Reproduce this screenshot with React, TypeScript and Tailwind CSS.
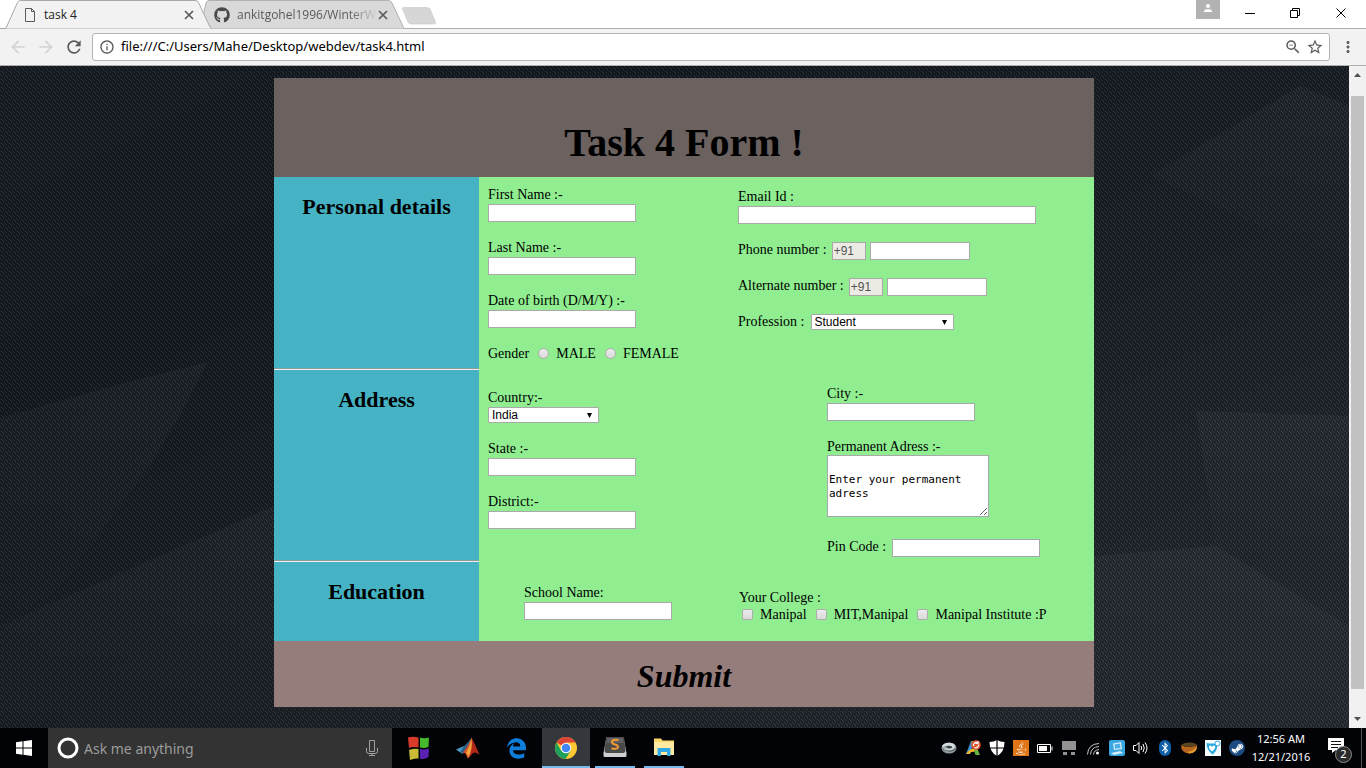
import type { ReactNode } from "react";
import { FaGithub, FaJava, FaSteamSymbol, FaBluetoothB } from "react-icons/fa";
import { FaEdgeLegacy } from "react-icons/fa6";
import {
  MdArrowBack,
  MdArrowForward,
  MdInfoOutline,
  MdMoreVert,
  MdPerson,
  MdRefresh,
  MdStarBorder,
  MdZoomOut,
} from "react-icons/md";

const boxStyle = "h-[18px] border border-[#a9a9a9] bg-white px-px text-[12px] outline-none";
const labelStyle = "pb-[2px] leading-[15px]";

function TextField({ id, label, width = "w-[148px]" }: { id: string; label: string; width?: string }) {
  return (
    <div className="flex flex-col items-start">
      <label htmlFor={id} className={labelStyle}>
        {label}
      </label>
      <input id={id} type="text" className={`${boxStyle} ${width}`} />
    </div>
  );
}

function PhoneField({ id, label }: { id: string; label: string }) {
  return (
    <div className="flex items-start">
      <label htmlFor={id} className={`pr-[5px] ${labelStyle}`}>
        {label}
      </label>
      <input
        type="text"
        disabled
        value="+91"
        aria-label={`${label} country code`}
        className="mr-1 h-[18px] w-[34px] border border-[#a9a9a9] bg-[#ebebe4] px-px font-['Liberation_Sans',Arial,sans-serif] text-[12px] text-[#545454]"
      />
      <input id={id} type="text" className={`${boxStyle} w-[100px]`} />
    </div>
  );
}

function SelectBox({ id, options, width }: { id: string; options: string[]; width: string }) {
  return (
    <div className={`relative flex h-4 ${width}`}>
      <select
        id={id}
        className="h-4 w-full appearance-none rounded-[1px] border border-[#a9a9a9] bg-white pl-[3px] font-['Liberation_Sans',Arial,sans-serif] text-[12px] leading-[14px] text-black outline-none"
      >
        {options.map((o) => (
          <option key={o}>{o}</option>
        ))}
      </select>
      <svg viewBox="0 0 5 5" className="pointer-events-none absolute right-[7px] top-[6px] size-[5px]" aria-hidden="true">
        <path d="M0 0h5L2.5 5z" fill="#000" />
      </svg>
    </div>
  );
}

function Tick({ type, name, label }: { type: "radio" | "checkbox"; name: string; label: string }) {
  const shape = type === "radio" ? "rounded-full" : "rounded-[2px]";
  return (
    <label className={`flex items-start gap-[7px] ${labelStyle}`}>
      <input
        type={type}
        name={name}
        className={`mt-[2px] size-[11px] appearance-none border border-[#adadad] bg-linear-to-b from-[#ececec] to-[#dadada] ${shape}`}
      />
      {label}
    </label>
  );
}

function Section({ title, height, divider, children }: { title: string; height: string; divider?: boolean; children: ReactNode }) {
  return (
    <section className={`flex ${height}`}>
      <div className="flex w-1/4 flex-col bg-[#45b3c4]">
        <h2 className="pt-[17px] text-center text-[22px] font-bold leading-[26px]">{title}</h2>
        {divider && <div className="mt-auto h-[2px] border-b border-t border-b-[#eeeeee] border-t-[#8c9a9a]" />}
      </div>
      <div className="flex flex-1 bg-[#90ee90] pl-[9px]">{children}</div>
    </section>
  );
}

function Backdrop() {
  return (
    <svg className="absolute inset-0 size-full" preserveAspectRatio="none" viewBox="0 0 1349 662" aria-hidden="true">
      <defs>
        <linearGradient id="base" x1="0" y1="0" x2="1" y2="1">
          <stop offset="0" stopColor="#181c23" />
          <stop offset="0.25" stopColor="#14181f" />
          <stop offset="0.6" stopColor="#1b1f26" />
          <stop offset="1" stopColor="#252a31" />
        </linearGradient>
        <pattern id="weave" width="8" height="8" patternUnits="userSpaceOnUse">
          <path
            d="M0 0h1v1H0zM2 2h1v1H2zM4 4h1v1H4zM6 6h1v1H6zM6 2h1v1H6zM2 6h1v1H2zM1 5h1v1H1zM5 1h1v1H5zM3 7h1v1H3zM7 3h1v1H7z"
            fill="#98a0aa"
            fillOpacity="0.18"
          />
          <path
            d="M1 0h1v1H1zM3 2h1v1H3zM5 4h1v1H5zM7 6h1v1H7zM5 2h1v1H5zM1 6h1v1H1zM0 3h1v1H0zM4 7h1v1H4zM2 4h1v1H2zM6 0h1v1H6z"
            fill="#000"
            fillOpacity="0.42"
          />
        </pattern>
        <linearGradient id="facet" x1="0" y1="0" x2="0" y2="1">
          <stop offset="0" stopColor="#fff" stopOpacity="0.035" />
          <stop offset="1" stopColor="#fff" stopOpacity="0" />
        </linearGradient>
      </defs>
      <rect width="1349" height="662" fill="url(#base)" />
      <g fill="url(#facet)">
        <path d="M0 352L120 318L208 296L185 340L150 400L60 520L0 560z" />
        <path d="M1196 345L1349 350V500L1216 480z" />
        <path d="M1094 490L1216 480L1349 560V662H1094z" />
        <path d="M1150 110L1300 20L1349 40V200z" />
        <path d="M0 560L274 440V662H0z" />
      </g>
      <rect width="1349" height="662" fill="url(#weave)" />
    </svg>
  );
}

function CloseIcon() {
  return (
    <svg viewBox="0 0 14 14" className="size-[14px]" fill="none" stroke="#5a5a5a" strokeWidth="1.700" aria-hidden="true">
      <path d="M3 3L11 11M11 3L3 11" />
    </svg>
  );
}

function TabStrip() {
  return (
    <header className="relative flex h-7 bg-white font-['Open_Sans','Segoe_UI',sans-serif] text-[12px] text-[#222]">
      <svg className="absolute left-0 top-0 h-[29px] w-[440px]" viewBox="0 0 440 29" aria-hidden="true">
        <path d="M200 28.500L206 3Q207 .5 209 .5H388Q391 .5 392 3L404 28.500" fill="#d9d9d9" stroke="#b0b0b0" />
        <path d="M404 7.500H427Q429 7.500 430 9L435.500 22Q436 24 434 24H411Q409 24 408 22L402.500 9Q402 7.500 404 7.500Z" fill="#d6d6d6" stroke="#c6c6c6" strokeWidth=".6" />
        <path d="M0 28.500H5Q6 28.500 6.500 27L17.500 2.500Q18.500 .5 20.500 .5H195Q197.500 .5 198.500 2.500L210 27Q211 28.500 212 28.500" fill="#f2f2f2" stroke="#a8a8a8" />
      </svg>
      <div className="relative flex w-[204px] items-center pl-6 pt-[2px]">
        <svg viewBox="0 0 12 14" className="h-[14px] w-3" fill="none" stroke="#5a5a5a" aria-hidden="true">
          <path d="M1.500 .5H7.500L10.500 3.500V13.500H1.500zM7.500 .5V3.500H10.500" />
        </svg>
        <span className="flex-1 pl-2">task 4</span>
        <button aria-label="Close task 4" className="mr-2">
          <CloseIcon />
        </button>
      </div>
      <div className="relative flex w-[185px] items-center pl-[10px] pt-[2px]">
        <FaGithub className="size-4 shrink-0 text-[#4a4a4a]" />
        <span className="ml-[7px] whitespace-nowrap bg-linear-to-r from-[#555] from-80% to-[#d0d0d0] bg-clip-text text-transparent">
          ankitgohel1996/WinterW
        </span>
        <button aria-label="Close ankitgohel1996" className="ml-auto shrink-0">
          <CloseIcon />
        </button>
      </div>
      <div className="relative ml-auto flex">
        <div className="flex h-[19px] w-6 items-center justify-center bg-[#b2b2b2]">
          <MdPerson className="mb-[3px] size-3 text-white" />
        </div>
        <div className="flex h-[26px] items-center pl-[23px] pr-[17px]">
          <svg viewBox="0 0 106 12" className="h-3 w-[106px]" fill="none" stroke="#000" aria-hidden="true">
            <path d="M2 6.500H12M47.500 3.500h7v7h-7zM49.500 3.500V1.500H56.500V8.500H54.500M93.500 1.500l9 9M102.500 1.500l-9 9" />
          </svg>
        </div>
      </div>
    </header>
  );
}

function Toolbar() {
  return (
    <div className="flex h-[38px] items-center border-b border-t border-[#b0b0b0] bg-[#f2f2f2] pl-2 font-['Noto_Sans','Segoe_UI',sans-serif]">
      <button aria-label="Back">
        <MdArrowBack className="size-5 text-[#d4d4d4]" />
      </button>
      <button aria-label="Forward" className="ml-2">
        <MdArrowForward className="size-5 text-[#d4d4d4]" />
      </button>
      <button aria-label="Reload" className="ml-2">
        <MdRefresh className="size-5 text-[#5a5a5a]" />
      </button>
      <div className="ml-2 flex h-7 flex-1 items-center rounded-[3px] border border-[#b4b4b4] bg-white pl-[6px] pr-[5px]">
        <MdInfoOutline className="size-4 shrink-0 text-[#5a5a5a]" />
        <input
          aria-label="Address"
          defaultValue="file:///C:/Users/Mahe/Desktop/webdev/task4.html"
          className="ml-[6px] min-w-0 flex-1 bg-transparent text-[13px] text-black outline-none"
        />
        <MdZoomOut className="size-[18px] shrink-0 text-[#5a5a5a]" />
        <MdStarBorder className="ml-1 size-[18px] shrink-0 text-[#5a5a5a]" />
      </div>
      <button aria-label="Menu" className="mx-[9px]">
        <MdMoreVert className="size-[18px] text-[#5a5a5a]" />
      </button>
    </div>
  );
}

function Scrollbar() {
  return (
    <div className="flex w-[17px] flex-col items-center bg-[#f1f1f1]" aria-hidden="true">
      <svg viewBox="0 0 17 17" className="size-[17px]">
        <path d="M5 11h7L8.500 7z" fill="#505050" />
      </svg>
      <div className="mb-[22px] mt-[13px] w-[13px] flex-1 bg-[#c1c1c1]" />
      <svg viewBox="0 0 17 17" className="size-[17px]">
        <path d="M5 6h7L8.500 10z" fill="#505050" />
      </svg>
    </div>
  );
}

function TaskForm() {
  return (
    <form className="relative w-full max-w-[820px] font-['Liberation_Serif','Times_New_Roman',serif] text-[14px] leading-[17px] text-black">
      <div className="bg-[#6b615f] pb-[9px] pt-[40px]">
        <h1 className="text-center text-[40px] font-bold leading-[50px]">Task 4 Form !</h1>
      </div>
      <Section title="Personal details" height="min-h-[193px]" divider>
        <div className="flex w-[250px] flex-col gap-[18px] pt-[10px]">
          <TextField id="first" label="First Name :-" />
          <TextField id="last" label="Last Name :-" />
          <TextField id="dob" label="Date of birth (D/M/Y) :-" />
          <div className="flex gap-[9px]">
            <span className={labelStyle}>Gender</span>
            <Tick type="radio" name="gender" label="MALE" />
            <Tick type="radio" name="gender" label="FEMALE" />
          </div>
        </div>
        <div className="flex flex-col gap-[18px] pt-3">
          <TextField id="email" label="Email Id :" width="w-[298px]" />
          <PhoneField id="phone" label="Phone number :" />
          <PhoneField id="alternate" label="Alternate number :" />
          <div className="flex items-start">
            <label htmlFor="profession" className={`pr-[6px] ${labelStyle}`}>
              Profession :
            </label>
            <SelectBox id="profession" options={["Student", "Teacher", "Other"]} width="w-[143px]" />
          </div>
        </div>
      </Section>
      <Section title="Address" height="min-h-[192px]" divider>
        <div className="flex w-[339px] flex-col gap-[18px] pt-5">
          <div className="flex flex-col items-start">
            <label htmlFor="country" className={labelStyle}>
              Country:-
            </label>
            <SelectBox id="country" options={["India", "Other"]} width="w-[111px]" />
          </div>
          <TextField id="state" label="State :-" />
          <TextField id="district" label="District:-" />
        </div>
        <div className="flex flex-col gap-[18px] pt-4">
          <TextField id="city" label="City :-" />
          <div className="flex flex-col items-start">
            <label htmlFor="address" className="pb-px leading-[15px]">
              Permanent Adress :-
            </label>
            <textarea
              id="address"
              defaultValue={"\nEnter your permanent adress"}
              className="h-[62px] w-[162px] resize overflow-auto border border-[#a9a9a9] bg-white px-px pb-px pt-[3px] font-['DejaVu_Sans_Mono',monospace] text-[11px] leading-[14px] outline-none"
            />
          </div>
          <div className="flex items-start pt-1">
            <label htmlFor="pin" className={`pr-[6px] ${labelStyle}`}>
              Pin Code :
            </label>
            <input id="pin" type="text" className={`${boxStyle} w-[148px]`} />
          </div>
        </div>
      </Section>
      <Section title="Education" height="min-h-[79px]">
        <div className="w-[251px] pl-9 pt-[23px]">
          <TextField id="school" label="School Name:" />
        </div>
        <fieldset className="pt-[27px]">
          <legend className="contents">Your College :</legend>
          <div className="flex gap-[9px] pl-[3px] pt-px">
            <Tick type="checkbox" name="college" label="Manipal" />
            <Tick type="checkbox" name="college" label="MIT,Manipal" />
            <Tick type="checkbox" name="college" label="Manipal Institute :P" />
          </div>
        </fieldset>
      </Section>
      <button
        type="submit"
        className="h-[66px] w-full bg-[#957d7b] pt-1 font-['Monotype_Corsiva','Liberation_Serif',cursive] text-[32px] font-bold italic leading-[50px]"
      >
        Submit
      </button>
    </form>
  );
}

function PinnedApps() {
  return (
    <div className="flex items-stretch">
      <button aria-label="Color blocks" className="flex w-[54px] items-center justify-center">
        <svg viewBox="0 0 24 24" className="size-6">
          <path d="M1 1.500Q6 0 11.500 1.500V11.500Q6 10.500 2 12z" fill="#d83a2c" />
          <path d="M13 1.500Q17 3 22 1.500L21.500 11Q17 12.500 13 11.500z" fill="#46b82c" />
          <path d="M2 14Q7 12 11.500 13V22.500Q7 22 3 24z" fill="#c9bb35" />
          <path d="M13 13Q17 14 22 12.500L21.500 21Q17 24 13 22.500z" fill="#5b21b5" />
        </svg>
      </button>
      <button aria-label="MATLAB" className="flex w-11 items-center justify-center">
        <svg viewBox="0 0 24 24" className="size-6">
          <path d="M0 13.500L8 10L11 12L6.500 18z" fill="#4f9bc9" />
          <path d="M8 10Q12 7 15.500 1.500L12 13L6.500 18L4.500 15.500z" fill="#2a5f8a" />
          <path d="M15.500 1.500Q13 9 6.500 17Q10 16 11.500 22.500Q15 21 17 13z" fill="#d4512a" />
          <path d="M15.500 1.500Q19 8 23.500 19Q19 14.500 16 18Q13 22 11.500 22.500Q15 12 15.500 1.500z" fill="#b3271b" />
          <path d="M15.500 2Q14 10 10 17Q12 18 12 22Q17 14 15.500 2z" fill="#f3a23c" />
        </svg>
      </button>
      <button aria-label="Edge" className="flex w-[52px] items-center justify-center">
        <FaEdgeLegacy className="size-[21px] text-[#0f7edb]" />
      </button>
      <button aria-label="Chrome" className="flex w-12 items-center justify-center border-b-2 border-[#76b9ed] bg-[#34373b] pt-[2px]">
        <svg viewBox="0 0 24 24" className="size-6">
          <circle cx="12" cy="12" r="11" fill="#fcc934" />
          <path d="M12 12L2.500 6.500A11 11 0 0 1 21.500 6.500H12z" fill="#db4437" />
          <path d="M2.500 6.500A11 11 0 0 0 11.500 23L16.800 14.500L12 12L7.200 14.800z" fill="#1da05b" />
          <circle cx="12" cy="12" r="5.300" fill="#fff" />
          <circle cx="12" cy="12" r="4.300" fill="#4285f4" />
        </svg>
      </button>
      <button aria-label="Sublime Text" className="mx-[5px] flex w-10 items-center justify-center border-b-2 border-[#76b9ed]">
        <svg viewBox="0 0 24 22" className="h-[22px] w-6">
          <path d="M3.500 1H20.500L23.500 17V20Q23.500 21 22 21H2Q.5 21 .5 20V17z" fill="#d0d0d0" />
          <path d="M3 1H21L22.500 15Q22 17 20 17H4Q2 17 1.500 15z" fill="#4a4a4a" />
          <path d="M4 2H20L20.500 7H3.500z" fill="#626262" />
          <path d="M15.500 4Q9 3 9 6Q9 8 12 8.500Q15 9 15 11Q15 13.500 8.500 12.500" fill="none" stroke="#f39a33" strokeWidth="2" />
        </svg>
      </button>
      <button aria-label="File Explorer" className="mx-1 flex w-10 items-center justify-center border-b-2 border-[#76b9ed]">
        <svg viewBox="0 0 22 20" className="h-5 w-[22px]">
          <path d="M1 1.500H8L9.500 3.500H21V18H1z" fill="#fbd86b" />
          <path d="M1 5H21V18H1z" fill="#ffe9a0" />
          <path d="M4.500 11H17.500V19H14V15H8V19H4.500z" fill="#2fa8e6" />
        </svg>
      </button>
    </div>
  );
}

function Tray() {
  return (
    <div className="ml-auto flex items-center gap-2 text-white">
      <svg viewBox="0 0 16 16" className="size-4">
        <ellipse cx="8" cy="8" rx="7.500" ry="5.500" fill="#8d989d" />
        <path d="M.8 6Q5 1 12 3.500Q16 6 12 9.500Q8 11.500 5 9Q4 6 8 6Q4.500 4.500 2.500 7.500Q3 12 9 12.500" fill="#d5dcde" />
        <path d="M5 7Q7 5 11 6.500Q12 8 9 8.500Q6 9 5 7z" fill="#39444a" />
        <path d="M2 9Q7 13.500 14.500 9" fill="none" stroke="#4d585d" />
      </svg>
      <svg viewBox="0 0 16 16" className="size-4">
        <path d="M1 14L6 1H9L5 14z" fill="#3f8fd0" />
        <path d="M6 1H9L15 15H10.500z" fill="#6bb43f" />
        <path d="M1 14Q5 8 10 9L9 12Q6 11 4.500 14z" fill="#f0b52a" />
        <circle cx="11" cy="5" r="4.800" fill="#e0552d" />
        <path d="M8.500 6A2.800 2.800 0 0 1 12.500 2.800M13.500 4.500A2.800 2.800 0 0 1 9.500 7.500M13 1V3.500H10.500" fill="none" stroke="#fff" strokeWidth="1.200" />
      </svg>
      <svg viewBox="0 0 16 16" className="size-4">
        <path d="M8 0Q11 2 15.500 2Q15.500 12 8 16Q.5 12 .5 2Q5 2 8 0z" fill="#fff" />
        <path d="M8 0V16M0 8H16" stroke="#000" strokeWidth="1.200" />
      </svg>
      <span className="flex size-4 items-center justify-center bg-[#e07518]">
        <FaJava className="size-[14px]" />
      </span>
      <svg viewBox="0 0 16 16" className="size-4" fill="none" stroke="#fff">
        <path d="M.5 4.500H13.500V12.500H.5z" />
        <path d="M2 6H10V11H2z" fill="#fff" stroke="none" />
        <path d="M15 6.500V10.500" />
      </svg>
      <svg viewBox="0 0 16 16" className="size-4" fill="#929292">
        <path d="M1 1H15V10H1zM2 12H6V15H2zM10 12H14V15H10z" />
      </svg>
      <svg viewBox="0 0 16 16" className="size-4" fill="none" stroke="#c4c4c4">
        <path d="M2.500 14.500Q3 4 14 3.500M5.500 14.500Q6 7 14 6.500M8.500 14.500Q9 10 14 9.500" />
        <circle cx="12.500" cy="13" r="1.500" fill="#fff" stroke="none" />
      </svg>
      <svg viewBox="0 0 16 16" className="size-4">
        <rect width="16" height="16" rx="2" fill="#3aa6e0" />
        <path d="M4 3.500L12 2L13 9L5 10zM2 13L11 11L14 13L5 15z" fill="#d5edf9" />
        <path d="M5.500 4.500L11 3.500L11.500 8L6 8.800z" fill="#4aaee4" />
      </svg>
      <svg viewBox="0 0 16 16" className="size-4" fill="none" stroke="#fff">
        <path d="M.5 5.500H3L6 2.500V13.500L3 10.500H.5zM8 6Q9.500 8 8 10M10 4Q12.500 8 10 12M12 2.500Q16 8 12 13.500" />
      </svg>
      <span className="flex size-4 items-center justify-center">
        <span className="flex h-4 w-3 items-center justify-center rounded-full bg-[#0f5fa8]">
          <FaBluetoothB className="size-3" />
        </span>
      </span>
      <svg viewBox="0 0 16 16" className="size-4">
        <path d="M0 5Q8 9 16 5Q16 13 8 13.500Q0 13 0 5z" fill="#b5651d" />
        <path d="M6 12Q14 11 16 6Q16 13 9 13.500z" fill="#e5a02c" />
        <path d="M0 5Q3 2 9 2.500Q15 3 16 5Q8 9 0 5z" fill="#5a4520" />
      </svg>
      <svg viewBox="0 0 16 16" className="size-4">
        <rect width="16" height="16" fill="#f4fbfe" />
        <path d="M1.500 3Q7 4 12 3Q13 11 7.500 14.500Q1.500 10 1.500 3z" fill="#2aa8dd" />
        <path d="M4 6Q6 4.500 7 7Q8 4.500 10 6Q11 8.500 7 11.500Q3.500 8.500 4 6z" fill="#fff" />
        <circle cx="12.500" cy="3.500" r="2.500" fill="#fff" stroke="#2aa8dd" />
      </svg>
      <span className="flex size-4 items-center justify-center rounded-full bg-[#1c4a82]">
        <FaSteamSymbol className="size-[13px]" />
      </span>
      <div className="-ml-[3px] w-[62px] text-center text-[11px] leading-[18px]">
        12:56 AM
        <br />
        12/21/2016
      </div>
      <button aria-label="Notifications" className="relative ml-2 mr-[9px] size-6">
        <svg viewBox="0 0 24 24" className="size-6">
          <path d="M0 2H16V14H8L4 17V14H0z" fill="#fff" />
          <path d="M3 5.500H13M3 8.500H13M3 11.500H10" stroke="#111" />
        </svg>
        <span className="absolute -bottom-[3px] right-0 flex size-[17px] items-center justify-center rounded-full border border-[#8a8a8a] bg-[#2b2b2b] text-[11px]">
          2
        </span>
      </button>
    </div>
  );
}

function Taskbar() {
  return (
    <footer className="flex h-10 bg-[#020307] font-['Noto_Sans','Segoe_UI',sans-serif]">
      <button aria-label="Start" className="flex w-12 items-center justify-center">
        <svg viewBox="0 0 16 16" className="size-4" fill="#fff">
          <path d="M0 2.200L6.500 1.300V7.500H0zM7.500 1.200L16 0V7.500H7.500zM0 8.500H6.500V14.700L0 13.800zM7.500 8.500H16V16L7.500 14.800z" />
        </svg>
      </button>
      <div className="flex w-[344px] items-center bg-[#333333] pl-[9px] pr-[13px]">
        <svg viewBox="0 0 22 22" className="size-[22px] shrink-0" fill="none">
          <circle cx="11" cy="11" r="9" stroke="#fff" strokeWidth="3" />
        </svg>
        <input
          aria-label="Search"
          placeholder="Ask me anything"
          className="ml-[5px] min-w-0 flex-1 bg-transparent text-[14px] outline-none placeholder:text-[#9b9b9b]"
        />
        <svg viewBox="0 0 14 18" className="h-[18px] w-[14px]" fill="none" stroke="#a0a0a0">
          <path d="M4.500 1.500H9.500V12.500H4.500zM1.500 9V12.500Q1.500 14.500 4 14.500H10Q12.500 14.500 12.500 12.500V9M7 14.500V16.500M4 16.500H10" />
        </svg>
      </div>
      <PinnedApps />
      <Tray />
      <div className="w-[5px] border-l border-[#555]" />
    </footer>
  );
}

export default function App() {
  return (
    <div className="flex min-h-screen flex-col">
      <TabStrip />
      <Toolbar />
      <div className="flex flex-1">
        <main className="relative flex flex-1 items-start justify-center pb-[21px] pl-[19px] pt-3">
          <Backdrop />
          <TaskForm />
        </main>
        <Scrollbar />
      </div>
      <Taskbar />
    </div>
  );
}
